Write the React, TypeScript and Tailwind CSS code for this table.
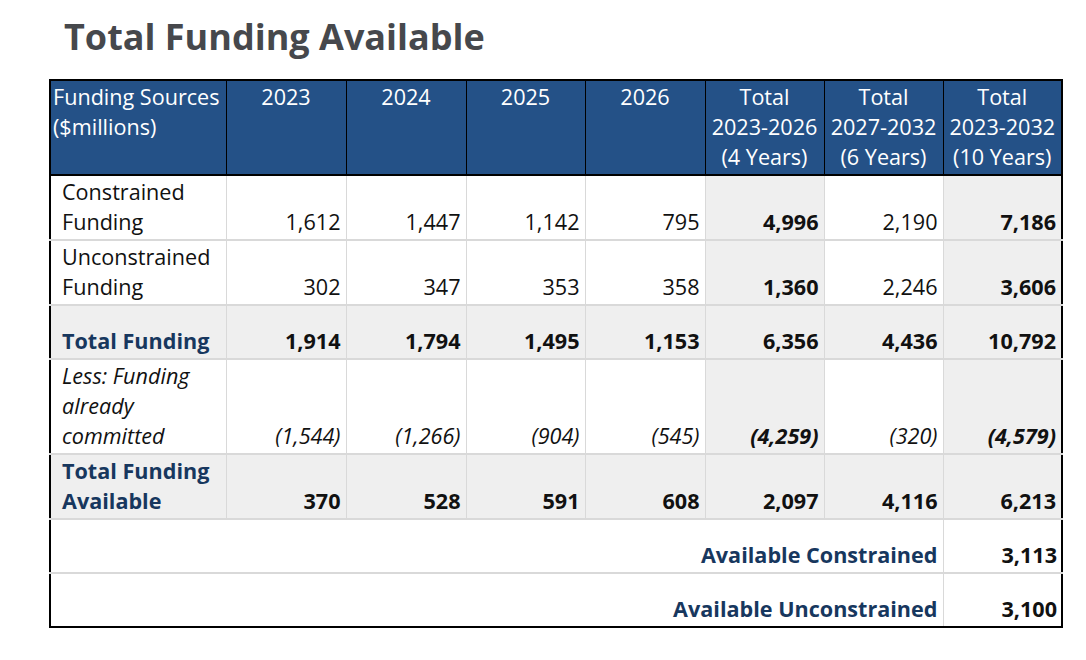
import React from "react";

type Cell = { v: string; b?: boolean; g?: boolean };

const yrs = ["2023", "2024", "2025", "2026"];

function Num({ c, italic }: { c: Cell; italic?: boolean }) {
  return (
    <td
      className={`border-r border-b-2 border-[#d9d9d9] align-bottom text-right pr-[5px] pb-[2px] ${c.g ? "bg-[#efefef]" : "bg-white"} ${c.b ? "font-bold" : ""} ${italic ? "italic" : ""} text-[#111]`}
    >
      {c.v}
    </td>
  );
}

function row(vals: string[], boldAll: boolean, grayAll: boolean): Cell[] {
  return vals.map((v, i) => ({
    v,
    b: boldAll || i === 4 || i === 6,
    g: grayAll || i === 4 || i === 6,
  }));
}

export default function App() {
  const r1 = row(["1,612", "1,447", "1,142", "795", "4,996", "2,190", "7,186"], false, false);
  const r2 = row(["302", "347", "353", "358", "1,360", "2,246", "3,606"], false, false);
  const r3 = row(["1,914", "1,794", "1,495", "1,153", "6,356", "4,436", "10,792"], true, true);
  const r4 = row(["(1,544)", "(1,266)", "(904)", "(545)", "(4,259)", "(320)", "(4,579)"], false, false);
  const r5 = row(["370", "528", "591", "608", "2,097", "4,116", "6,213"], true, true);

  const labelCls = "border-r border-b-2 border-[#d9d9d9] align-bottom text-left pl-[11px] pb-[2px]";

  return (
    <div className="w-[1086px] h-[660px] bg-white font-['Open_Sans',sans-serif] overflow-hidden">
      <h1 className="pl-[64px] pt-[12px] text-[36px] leading-[49px] font-bold text-[#46484c]">
        Total Funding Available
      </h1>
      <table className="ml-[49px] mt-[18px] w-[1012px] table-fixed border-collapse border-2 border-black text-[21.6px] leading-[30px]">
        <colgroup>
          <col className="w-[176px]" />
          <col className="w-[120px]" />
          <col className="w-[120px]" />
          <col className="w-[119px]" />
          <col className="w-[120px]" />
          <col className="w-[119px]" />
          <col className="w-[119px]" />
          <col className="w-[119px]" />
        </colgroup>
        <thead>
          <tr className="h-[95px] bg-[#245187] text-white">
            <th className="border border-black border-b-2 align-top text-left font-normal pl-[2px] pt-[1px]">
              Funding Sources ($millions)
            </th>
            {yrs.map((y) => (
              <th key={y} className="border border-black border-b-2 align-top text-center font-normal pt-[1px]">
                {y}
              </th>
            ))}
            <th className="border border-black border-b-2 align-top text-center font-normal pt-[1px] whitespace-nowrap">
              Total
              <br />
              2023-2026
              <br />
              (4 Years)
            </th>
            <th className="border border-black border-b-2 align-top text-center font-normal pt-[1px] whitespace-nowrap">
              Total
              <br />
              2027-2032
              <br />
              (6 Years)
            </th>
            <th className="border border-black border-b-2 align-top text-center font-normal pt-[1px] whitespace-nowrap">
              Total
              <br />
              2023-2032
              <br />
              (10 Years)
            </th>
          </tr>
        </thead>
        <tbody>
          <tr className="h-[65px]">
            <td className={`${labelCls} text-[#111]`}>
              Constrained
              <br />
              Funding
            </td>
            {r1.map((c, i) => (
              <Num key={i} c={c} />
            ))}
          </tr>
          <tr className="h-[65px]">
            <td className={`${labelCls} text-[#111]`}>
              Unconstrained
              <br />
              Funding
            </td>
            {r2.map((c, i) => (
              <Num key={i} c={c} />
            ))}
          </tr>
          <tr className="h-[54px]">
            <td className={`${labelCls} bg-[#efefef] font-bold text-[#17375e]`}>Total Funding</td>
            {r3.map((c, i) => (
              <Num key={i} c={c} />
            ))}
          </tr>
          <tr className="h-[95px]">
            <td className={`${labelCls} italic text-[#111]`}>
              Less: Funding
              <br />
              already
              <br />
              committed
            </td>
            {r4.map((c, i) => (
              <Num key={i} c={c} italic />
            ))}
          </tr>
          <tr className="h-[65px]">
            <td className={`${labelCls} bg-[#efefef] font-bold text-[#17375e]`}>
              Total Funding
              <br />
              Available
            </td>
            {r5.map((c, i) => (
              <Num key={i} c={c} />
            ))}
          </tr>
          <tr className="h-[54px]">
            <td
              colSpan={7}
              className="border-r border-b-2 border-[#d9d9d9] align-bottom text-right pr-[5px] pb-[2px] font-bold text-[#17375e]"
            >
              Available Constrained
            </td>
            <td className="border-b-2 border-[#d9d9d9] align-bottom text-right pr-[4px] pb-[2px] font-bold text-[#111]">
              3,113
            </td>
          </tr>
          <tr className="h-[54px]">
            <td
              colSpan={7}
              className="border-r border-[#d9d9d9] align-bottom text-right pr-[5px] pb-[2px] font-bold text-[#17375e]"
            >
              Available Unconstrained
            </td>
            <td className="align-bottom text-right pr-[4px] pb-[2px] font-bold text-[#111]">3,100</td>
          </tr>
        </tbody>
      </table>
    </div>
  );
}
